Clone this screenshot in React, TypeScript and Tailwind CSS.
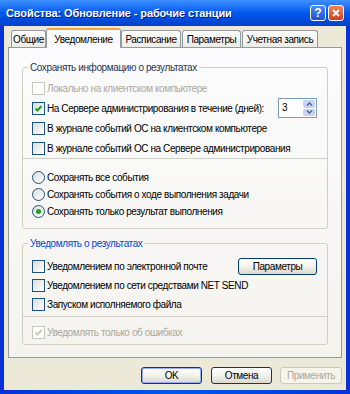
import type { ReactNode } from "react";

const Check = ({ checked = false, disabled = false }: { checked?: boolean; disabled?: boolean }) => (
  <span
    className={`flex h-[13px] w-[13px] shrink-0 items-center justify-center border ${
      disabled ? "border-[#cac8bb] bg-white" : "border-[#1c5180] bg-gradient-to-br from-[#dcdcd7] to-white"
    }`}
  >
    {checked && (
      <svg viewBox="0 0 11 11" className="h-[11px] w-[11px]">
        <path
          d="M2.5 5.5 L4.5 7.5 L8.5 3"
          fill="none"
          stroke={disabled ? "#cac8bb" : "#21a121"}
          strokeWidth="2"
        />
      </svg>
    )}
  </span>
);

const Radio = ({ checked = false }: { checked?: boolean }) => (
  <span className="flex h-[13px] w-[13px] shrink-0 items-center justify-center rounded-full border border-[#1c5180] bg-gradient-to-br from-[#dcdcd7] to-white">
    {checked && <span className="h-[5px] w-[5px] rounded-full bg-[#21a121]" />}
  </span>
);

const CheckRow = ({
  label,
  checked,
  disabled,
  className = "h-[20px]",
  children,
}: {
  label: string;
  checked?: boolean;
  disabled?: boolean;
  className?: string;
  children?: ReactNode;
}) => (
  <div className={`flex items-center gap-[2px] whitespace-nowrap pl-[9px] pr-[10px] ${className}`}>
    <Check checked={checked} disabled={disabled} />
    <span className={disabled ? "text-[#aca899]" : "text-black"}>{label}</span>
    {children}
  </div>
);

const RadioRow = ({ label, checked }: { label: string; checked?: boolean }) => (
  <div className="flex h-[17px] items-center gap-[2px] whitespace-nowrap pl-[9px]">
    <Radio checked={checked} />
    <span>{label}</span>
  </div>
);

const XpButton = ({
  children,
  disabled,
  isDefault,
  className = "",
}: {
  children: ReactNode;
  disabled?: boolean;
  isDefault?: boolean;
  className?: string;
}) => (
  <div
    className={`flex h-[17px] items-center justify-center rounded-[3px] border ${
      disabled
        ? "border-[#c9c7ba] bg-[#f5f4ea] text-[#aca899]"
        : "border-[#003c74] bg-gradient-to-b from-white via-[#f3f2ec] to-[#dcd8cb] text-black"
    } ${isDefault ? "shadow-[inset_0_0_0_1px_#97aef2]" : ""} ${className}`}
  >
    {children}
  </div>
);

const Spin = () => (
  <div className="ml-auto flex h-[20px] w-[39px] items-stretch border border-[#7f9db9] bg-white">
    <span className="flex-1 pl-[3px] pt-[2px] leading-[13px]">3</span>
    <div className="my-px mr-px flex w-[12px] flex-col gap-px">
      <div className="flex flex-1 items-center justify-center rounded-[2px] bg-[#c6d3f7]">
        <svg viewBox="0 0 7 4" className="h-[4px] w-[7px]">
          <path d="M1 3.5 L3.5 1 L6 3.5" fill="none" stroke="#4d6185" strokeWidth="1.3" />
        </svg>
      </div>
      <div className="flex flex-1 items-center justify-center rounded-[2px] bg-[#c6d3f7]">
        <svg viewBox="0 0 7 4" className="h-[4px] w-[7px]">
          <path d="M1 0.5 L3.5 3 L6 0.5" fill="none" stroke="#4d6185" strokeWidth="1.3" />
        </svg>
      </div>
    </div>
  </div>
);

const tabs = [
  { label: "Общие", w: "w-[35px]" },
  { label: "Уведомление", w: "w-[75px]", active: true },
  { label: "Расписание", w: "w-[60px]" },
  { label: "Параметры", w: "w-[59px] ml-px" },
  { label: "Учетная запись", w: "w-[76px] ml-px" },
];

export default function App() {
  return (
    <div className="flex h-[394px] w-[350px] flex-col bg-gradient-to-r from-[#0831d9] via-[#0058ee] to-[#0831d9] font-['Liberation_Sans',Arial,sans-serif] text-[10px] tracking-[-0.4px] text-black">
      {/* title bar */}
      <div className="flex h-[26px] shrink-0 items-center bg-gradient-to-b from-[#3d8fff] via-[#0058ee] to-[#0040c8] pl-[6px] pr-[6px]">
        <span className="text-[11px] font-bold tracking-[-0.1px] text-white [text-shadow:1px_1px_0_#0a1883]">
          Свойства: Обновление - рабочие станции
        </span>
        <div className="ml-auto flex gap-[2px] tracking-normal">
          <div className="flex h-[16px] w-[16px] items-center justify-center rounded-[3px] border border-white bg-gradient-to-b from-[#4a8cfb] to-[#1553d8] text-[12px] font-bold leading-none text-white">
            ?
          </div>
          <div className="flex h-[16px] w-[16px] items-center justify-center rounded-[3px] border border-white bg-gradient-to-b from-[#ec8560] to-[#c93f16]">
            <svg viewBox="0 0 10 10" className="h-[10px] w-[10px]">
              <path d="M2 2 L8 8 M8 2 L2 8" stroke="white" strokeWidth="1.8" />
            </svg>
          </div>
        </div>
      </div>

      {/* window body */}
      <div className="mx-[4px] mb-[4px] flex flex-1 flex-col bg-[#ece9d8] px-[4px] pt-[2px]">
        <div className="flex h-[19px] items-end pl-[3px]">
          {tabs.map((t) =>
            t.active ? (
              <div
                key={t.label}
                className={`relative z-10 -mb-px flex h-[20px] items-center justify-center rounded-t-[3px] border border-b-0 border-[#919b9c] border-t-2 border-t-[#f5a83a] bg-[#fcfcfe] ${t.w}`}
              >
                {t.label}
              </div>
            ) : (
              <div
                key={t.label}
                className={`flex h-[17px] items-center justify-center rounded-t-[3px] border border-b-0 border-[#919b9c] bg-gradient-to-b from-white to-[#ecebe6] ${t.w}`}
              >
                {t.label}
              </div>
            )
          )}
        </div>

        {/* tab page */}
        <div className="h-[311px] border border-[#919b9c] bg-gradient-to-b from-[#fcfcfe] to-[#f4f3ee] px-[13px] pt-[13px]">
          <fieldset className="rounded-[3px] border border-[#d0d0bf]">
            <legend className="ml-[5px] px-[2px] leading-[13px] text-[#2a3550]">Сохранять информацию о результатах</legend>
            <div className="pt-[4px]">
              <CheckRow label="Локально на клиентском компьютере" disabled />
              <CheckRow label="На Сервере администрирования в течение (дней):" checked>
                <Spin />
              </CheckRow>
              <CheckRow label="В журнале событий ОС на клиентском компьютере" />
              <CheckRow label="В журнале событий ОС на Сервере администрирования" />
            </div>
            <div className="h-px bg-[#d0d0bf]" />
            <div className="pb-[8px] pt-[10px]">
              <RadioRow label="Сохранять все события" />
              <RadioRow label="Сохранять события о ходе выполнения задачи" />
              <RadioRow label="Сохранять только результат выполнения" checked />
            </div>
          </fieldset>

          <fieldset className="mt-[8px] rounded-[3px] border border-[#d0d0bf]">
            <legend className="ml-[5px] px-[2px] leading-[13px] text-[#0046d5]">Уведомлять о результатах</legend>
            <div className="pb-[2px] pt-[7px]">
              <CheckRow label="Уведомлением по электронной почте" className="h-[19px]">
                <XpButton className="ml-auto w-[79px]">Параметры</XpButton>
              </CheckRow>
              <CheckRow label="Уведомлением по сети средствами NET SEND" className="h-[19px]" />
              <CheckRow label="Запуском исполняемого файла" className="h-[19px]" />
            </div>
            <div className="h-px bg-[#d0d0bf]" />
            <div className="pb-[4px] pt-[7px]">
              <CheckRow label="Уведомлять только об ошибках" checked disabled className="h-[16px]" />
            </div>
          </fieldset>
        </div>

        {/* dialog buttons */}
        <div className="mt-[9px] flex justify-end gap-[9px]">
          <XpButton isDefault className="w-[61px]">OK</XpButton>
          <XpButton className="w-[61px]">Отмена</XpButton>
          <XpButton disabled className="-ml-px w-[62px]">Применить</XpButton>
        </div>
      </div>
    </div>
  );
}
